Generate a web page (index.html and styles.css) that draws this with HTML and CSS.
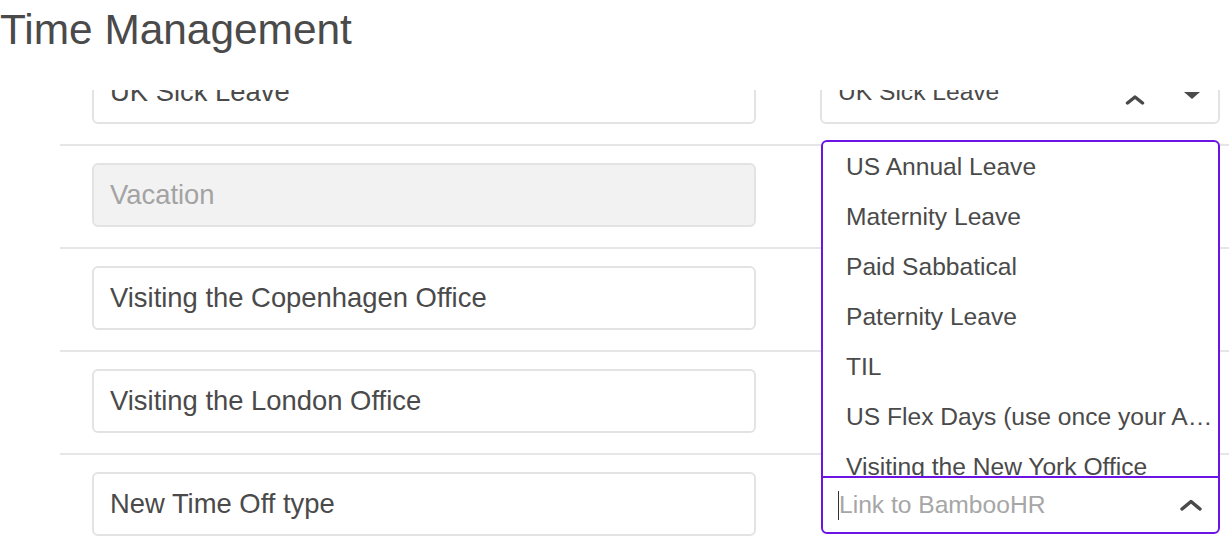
FILE: index.html
```html
<!DOCTYPE html>
<html lang="en">
<head>
  <meta charset="UTF-8" />
  <meta name="viewport" content="width=device-width, initial-scale=1.0" />
  <title>Time Management</title>
  <link rel="stylesheet" href="styles.css">
</head>
<body>
  <h1 class="page-title">Time Management</h1>

  <div class="types">
    <div class="types-list">

      <div class="type-row">
        <input class="type-name" type="text" value="UK Sick Leave" />
        <div class="type-cell">
          <div class="type-select">
            <span class="type-select-value">UK Sick Leave</span>
            <svg class="icon-chevron" width="20" height="10" viewBox="0 0 20 10">
              <path d="M2.5 8 L10 2 L17.5 8" fill="none" stroke="#4a4a4a" stroke-width="3.5" stroke-linecap="round" stroke-linejoin="round" />
            </svg>
            <svg class="icon-caret" width="16" height="7" viewBox="0 0 16 7">
              <path d="M0 0 H16 L8 7 Z" fill="#4a4a4a" />
            </svg>
          </div>
        </div>
      </div>

      <div class="type-row">
        <input class="type-name" type="text" value="Vacation" disabled />
        <div class="type-cell"></div>
      </div>

      <div class="type-row">
        <input class="type-name" type="text" value="Visiting the Copenhagen Office" />
        <div class="type-cell"></div>
      </div>

      <div class="type-row">
        <input class="type-name" type="text" value="Visiting the London Office" />
        <div class="type-cell"></div>
      </div>

      <div class="type-row">
        <input class="type-name" type="text" value="New Time Off type" />
        <div class="type-cell">
          <div class="picker">
            <ul class="picker-menu">
              <li>US Annual Leave</li>
              <li>Maternity Leave</li>
              <li>Paid Sabbatical</li>
              <li>Paternity Leave</li>
              <li>TIL</li>
              <li>US Flex Days (use once your Annual Leave is used up)</li>
              <li>Visiting the New York Office</li>
            </ul>
            <div class="picker-control">
              <span class="picker-cursor"></span>
              <span class="picker-placeholder">Link to BambooHR</span>
              <svg class="picker-toggle" width="24" height="12" viewBox="0 0 24 12">
                <path d="M3 10 L12 2.5 L21 10" fill="none" stroke="#4a4a4a" stroke-width="3.5" stroke-linecap="round" stroke-linejoin="round" />
              </svg>
            </div>
          </div>
        </div>
      </div>

    </div>
  </div>
</body>
</html>
```

FILE: styles.css
```css
body {
  margin: 0;
  font-family: 'Liberation Sans', Arial, sans-serif;
  color: #4a4a4a;
  background: #fff;
}
.page-title {
  margin: 0;
  height: 90px;
  padding-top: 9px;
  box-sizing: border-box;
  font-size: 42.4px;
  font-weight: 400;
  line-height: 42px;
  color: #4a4a4a;
}
.types {
  height: calc(100vh - 90px);
  overflow: hidden;
}
.types-list {
  margin-top: -47px;
  padding-left: 60px;
}
.type-row {
  display: flex;
  align-items: center;
  gap: 64px;
  padding: 17px 0 20px 32px;
  border-bottom: 2px solid #e6e6e6;
}
.type-name {
  width: 664px;
  height: 64px;
  box-sizing: border-box;
  margin: 0;
  padding: 0 16px;
  border: 2px solid #e3e3e3;
  border-radius: 6px;
  background: #fff;
  font-family: inherit;
  font-size: 27.4px;
  color: #4a4a4a;
  outline: none;
}
.type-name:disabled {
  background: #f2f2f2;
  color: #a3a3a3;
}
.type-cell {
  position: relative;
  width: 400px;
  height: 64px;
}
.type-select {
  display: flex;
  align-items: center;
  height: 64px;
  box-sizing: border-box;
  padding: 0 18px 0 16px;
  border: 2px solid #e3e3e3;
  border-radius: 6px;
  font-size: 24.6px;
}
.type-select-value {
  flex: 1;
  white-space: nowrap;
}
.icon-chevron {
  margin-top: 15px;
}
.icon-caret {
  margin-top: 7px;
  margin-left: 39px;
}
.picker {
  position: absolute;
  left: 1px;
  right: 0;
  bottom: 2px;
  height: 394px;
  box-sizing: border-box;
  display: flex;
  flex-direction: column;
  border: 2px solid #6c14e3;
  border-radius: 6px;
  background: #fff;
  z-index: 1;
}
.picker-menu {
  flex: 1;
  margin: 0;
  padding: 0;
  list-style: none;
  overflow: hidden;
}
.picker-menu li {
  height: 50px;
  line-height: 50px;
  padding: 0 4px 0 23px;
  font-size: 24.6px;
  white-space: nowrap;
  overflow: hidden;
  text-overflow: ellipsis;
}
.picker-control {
  display: flex;
  align-items: center;
  height: 56px;
  box-sizing: border-box;
  padding: 0 15px;
  border-top: 2px solid #6c14e3;
  font-size: 24.6px;
}
.picker-cursor {
  width: 1px;
  height: 29px;
  background: #333;
}
.picker-placeholder {
  flex: 1;
  color: #a6a6a6;
  white-space: nowrap;
}
```
